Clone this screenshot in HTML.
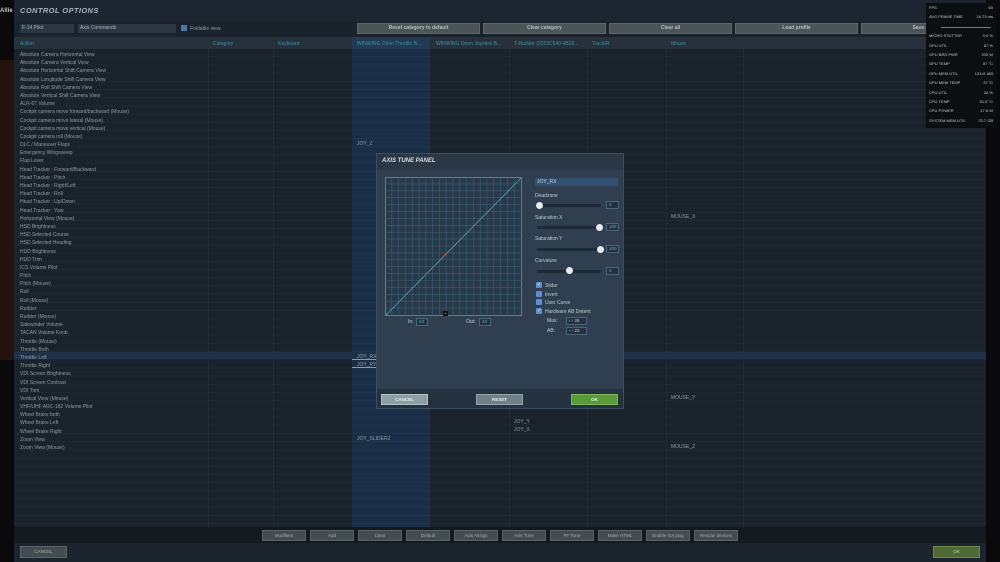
<!DOCTYPE html>
<html><head><meta charset="utf-8"><style>
*{margin:0;padding:0;box-sizing:border-box}
body{width:1000px;height:562px;overflow:hidden;background:#0a0a0c;font-family:"Liberation Sans",sans-serif;position:relative;color:#aab4bc}
.a{position:absolute}
.win{left:14px;top:0;width:972px;height:562px;background:#1a222b}
.t{font-size:5px;white-space:nowrap;color:#939da5}
.h{font-size:5px;color:#3d8fa8;white-space:nowrap}
.btn{background:#4b5557;border:1px solid #5d6769;color:#b8bec0;font-size:5px;font-weight:bold;text-align:center;line-height:9px}
.bb{background:#434c50;border:1px solid #5a6466;color:#a8b0b2;font-size:4.5px;text-align:center;line-height:9px;width:44px;height:11px;top:530px}
.ov div{display:flex;justify-content:space-between;font-size:4px;color:#c8cccf;height:9.4px;line-height:9.4px}
.cb{width:6px;height:6px;background:#5d8fd0;border-radius:1px;color:#fff;font-size:5px;line-height:6px;text-align:center}
.sl{height:3px;background:#1e2a36;border-radius:2px}
.kn{width:7px;height:7px;border-radius:50%;background:#e8ecef}
.nb{border:1px solid #4a6478;background:#24323f;color:#4fb0d0;font-size:4.5px;line-height:6px;padding-left:2px;height:8px}
.pt{font-size:5px;color:#c4ccd2}
.vl{position:absolute;top:49px;height:478px;width:1px;background:#222b35}
</style></head><body>
<div class="a t" style="left:0;top:8px;color:#c8c8c8;font-weight:bold;font-size:6px">Allie</div>
<div class="a" style="left:0;top:60px;width:14px;height:300px;background:#24120e"></div>
<div class="a win"></div>
<div class="a" style="left:14px;top:49px;width:972px;height:478px;background:repeating-linear-gradient(#1a222b 0,#1a222b 7.2px,#202933 7.2px,#202933 8.19px)"></div>
<div class="vl" style="left:208px"></div><div class="vl" style="left:273px"></div><div class="vl" style="left:509px"></div><div class="vl" style="left:587px"></div><div class="vl" style="left:666px"></div><div class="vl" style="left:743px"></div>
<div class="a" style="left:14px;top:0;width:972px;height:21px;background:#1d2630"></div>
<div class="a" style="left:20px;top:6px;font-size:7.5px;font-weight:bold;font-style:italic;color:#a8b2ba;letter-spacing:.4px">CONTROL OPTIONS</div>
<div class="a" style="left:20px;top:24px;width:54px;height:9px;background:#2b3744;font-size:5px;line-height:9px;padding-left:2px">F-14 Pilot</div>
<div class="a" style="left:78px;top:24px;width:98px;height:9px;background:#2b3744;font-size:5px;line-height:9px;padding-left:2px">Axis Commands</div>
<div class="a" style="left:181px;top:25px;width:6px;height:6px;background:#4f77a3"></div>
<div class="a t" style="left:190px;top:26px">Foldable view</div>
<div class="a btn" style="left:357px;top:23px;width:123px;height:11px">Reset category to default</div>
<div class="a btn" style="left:483px;top:23px;width:123px;height:11px">Clear category</div>
<div class="a btn" style="left:609px;top:23px;width:123px;height:11px">Clear all</div>
<div class="a btn" style="left:735px;top:23px;width:123px;height:11px">Load profile</div>
<div class="a btn" style="left:861px;top:23px;width:124px;height:11px">Save pro</div>
<div class="a" style="left:14px;top:37px;width:972px;height:12px;background:#27313c"></div>
<div class="a" style="left:352px;top:49px;width:78px;height:478px;background:repeating-linear-gradient(#1a2f47 0,#1a2f47 7.2px,#20364f 7.2px,#20364f 8.19px)"></div>
<div class="a" style="left:352px;top:37px;width:78px;height:12px;background:#223a54"></div>
<div class="a h" style="left:20px;top:41px">Action</div>
<div class="a h" style="left:213px;top:41px">Category</div>
<div class="a h" style="left:278px;top:41px">Keyboard</div>
<div class="a h" style="left:357px;top:41px">WINWING Orion Throttle B...</div>
<div class="a h" style="left:436px;top:41px">WINWING Orion Joystick B...</div>
<div class="a h" style="left:514px;top:41px">T-Rudder {2253C540-4B22...</div>
<div class="a h" style="left:592px;top:41px">TrackIR</div>
<div class="a h" style="left:671px;top:41px">Mouse</div>
<div class="a" style="left:14px;top:352px;width:972px;height:7px;background:#1f3248"></div>
<div class="a" style="left:20px;top:51px">
<div class="t" style="line-height:8.19px">Absolute Camera Horizontal View<br>Absolute Camera Vertical View<br>Absolute Horizontal Shift Camera View<br>Absolute Longitude Shift Camera View<br>Absolute Roll Shift Camera View<br>Absolute Vertical Shift Camera View<br>ALR-67 Volume<br>Cockpit camera move forward/backward (Mouse)<br>Cockpit camera move lateral (Mouse)<br>Cockpit camera move vertical (Mouse)<br>Cockpit camera roll (Mouse)<br>DLC / Maneuver Flaps<br>Emergency Wingsweep<br>Flap Lever<br>Head Tracker : Forward/Backward<br>Head Tracker : Pitch<br>Head Tracker : Right/Left<br>Head Tracker : Roll<br>Head Tracker : Up/Down<br>Head Tracker : Yaw<br>Horizontal View (Mouse)<br>HSD Brightness<br>HSD Selected Course<br>HSD Selected Heading<br>HUD Brightness<br>HUD Trim<br>ICS Volume Pilot<br>Pitch<br>Pitch (Mouse)<br>Roll<br>Roll (Mouse)<br>Rudder<br>Rudder (Mouse)<br>Sidewinder Volume<br>TACAN Volume Knob<br>Throttle (Mouse)<br>Throttle Both<br>Throttle Left<br>Throttle Right<br>VDI Screen Brightness<br>VDI Screen Contrast<br>VDI Trim<br>Vertical View (Mouse)<br>VHF/UHF ARC-182 Volume Pilot<br>Wheel Brake both<br>Wheel Brake Left<br>Wheel Brake Right<br>Zoom View<br>Zoom View (Mouse)</div></div>
<div class="a t" style="left:357px;top:141px">JOY_Z</div>
<div class="a t" style="left:357px;top:354px">JOY_RX</div>
<div class="a t" style="left:357px;top:362px">JOY_RY</div>
<div class="a" style="left:352px;top:359px;width:76px;height:1px;background:#8a9aa8"></div>
<div class="a" style="left:352px;top:367px;width:76px;height:1px;background:#8a9aa8"></div>
<div class="a t" style="left:357px;top:436px">JOY_SLIDER2</div>
<div class="a t" style="left:671px;top:214px">MOUSE_X</div>
<div class="a t" style="left:671px;top:395px">MOUSE_Y</div>
<div class="a t" style="left:671px;top:444px">MOUSE_Z</div>
<div class="a t" style="left:514px;top:419px">JOY_Y</div>
<div class="a t" style="left:514px;top:427px">JOY_X</div>
<div class="a" style="left:14px;top:527px;width:972px;height:16px;background:#141a20"></div>
<div class="a bb" style="left:262px">Modifiers</div>
<div class="a bb" style="left:310px">Add</div>
<div class="a bb" style="left:358px">Clear</div>
<div class="a bb" style="left:406px">Default</div>
<div class="a bb" style="left:454px">Axis Assign</div>
<div class="a bb" style="left:502px">Axis Tune</div>
<div class="a bb" style="left:550px">FF Tune</div>
<div class="a bb" style="left:598px">Make HTML</div>
<div class="a bb" style="left:646px">Enable hot plug</div>
<div class="a bb" style="left:694px">Rescan devices</div>
<div class="a" style="left:14px;top:543px;width:972px;height:19px;background:#1c252e"></div>
<div class="a bb" style="left:20px;top:546px;width:47px;height:12px;line-height:10px">CANCEL</div>
<div class="a bb" style="left:933px;top:546px;width:47px;height:12px;line-height:10px;background:#4f6a34;border-color:#6a8a48;color:#d0d8c8">OK</div>
<div class="a" style="left:376px;top:153px;width:248px;height:256px;background:#2f3f4f;border:1px solid #3d4e5e"></div>
<div class="a" style="left:377px;top:154px;width:246px;height:16px;background:#2a3846"></div>
<div class="a" style="left:382px;top:158px;font-size:6px;font-weight:bold;font-style:italic;color:#d8dee4">AXIS TUNE PANEL</div>
<svg class="a" style="left:385px;top:177px" width="137" height="139" viewBox="0 0 137 139">
<rect x="0.5" y="0.5" width="136" height="138" fill="#283a4a" stroke="#4a8aa0"/>
<g stroke="#3a5f72" stroke-width="0.6">
<path d="M6.8 0V139M13.6 0V139M20.4 0V139M27.2 0V139M34 0V139M40.8 0V139M47.6 0V139M54.4 0V139M61.2 0V139M68 0V139M74.8 0V139M81.6 0V139M88.4 0V139M95.2 0V139M102 0V139M108.8 0V139M115.6 0V139M122.4 0V139M129.2 0V139"/>
<path d="M0 6.9H137M0 13.8H137M0 20.7H137M0 27.6H137M0 34.5H137M0 41.4H137M0 48.3H137M0 55.2H137M0 62.1H137M0 69H137M0 75.9H137M0 82.8H137M0 89.7H137M0 96.6H137M0 103.5H137M0 110.4H137M0 117.3H137M0 124.2H137M0 131.1H137"/>
</g>
<line x1="1" y1="138" x2="136" y2="1" stroke="#5aa0b8" stroke-width="0.8"/>
<circle cx="60" cy="78" r="1.2" fill="#e03030"/>
<rect x="58" y="134" width="5" height="5" fill="#111"/>
<circle cx="60.5" cy="136.5" r="0.9" fill="#e03030"/>
</svg>
<div class="a pt" style="left:408px;top:319px">In:</div>
<div class="a nb" style="left:416px;top:318px;width:12px">43</div>
<div class="a pt" style="left:466px;top:319px">Out:</div>
<div class="a nb" style="left:479px;top:318px;width:12px">43</div>
<div class="a" style="left:535px;top:178px;width:83px;height:8px;background:#33516e;font-size:5px;color:#c8d8e4;line-height:8px;padding-left:2px">JOY_RX</div>
<div class="a pt" style="left:535px;top:193px">Deadzone</div>
<div class="a sl" style="left:537px;top:204px;width:64px"></div><div class="a kn" style="left:536px;top:202px"></div>
<div class="a nb" style="left:606px;top:201px;width:13px">0</div>
<div class="a pt" style="left:535px;top:215px">Saturation X</div>
<div class="a sl" style="left:537px;top:226px;width:64px"></div><div class="a kn" style="left:596px;top:224px"></div>
<div class="a nb" style="left:606px;top:223px;width:13px">100</div>
<div class="a pt" style="left:535px;top:236px">Saturation Y</div>
<div class="a sl" style="left:537px;top:248px;width:64px"></div><div class="a kn" style="left:597px;top:246px"></div>
<div class="a nb" style="left:606px;top:245px;width:13px">100</div>
<div class="a pt" style="left:535px;top:258px">Curvature</div>
<div class="a sl" style="left:537px;top:270px;width:64px"></div><div class="a kn" style="left:566px;top:267px"></div>
<div class="a nb" style="left:606px;top:267px;width:13px">0</div>
<div class="a cb" style="left:536px;top:282px">✓</div><div class="a pt" style="left:545px;top:283px">Slider</div>
<div class="a cb" style="left:536px;top:291px"></div><div class="a pt" style="left:545px;top:292px">Invert</div>
<div class="a cb" style="left:536px;top:299px"></div><div class="a pt" style="left:545px;top:300px">User Curve</div>
<div class="a cb" style="left:536px;top:308px">✓</div><div class="a pt" style="left:545px;top:309px">Hardware AB Detent</div>
<div class="a pt" style="left:547px;top:318px">Max:</div>
<div class="a nb" style="left:566px;top:317px;width:21px;color:#c4ccd2">‹ › 26</div>
<div class="a pt" style="left:547px;top:328px">AB:</div>
<div class="a nb" style="left:566px;top:327px;width:21px;color:#c4ccd2">‹ › 23</div>
<div class="a" style="left:377px;top:389px;width:246px;height:19px;background:#243240"></div>
<div class="a" style="left:381px;top:394px;width:47px;height:11px;background:#8a9ea4;border:1px solid #b0c0c4;color:#e8eef0;font-size:4.5px;font-weight:bold;text-align:center;line-height:9px">CANCEL</div>
<div class="a" style="left:476px;top:394px;width:47px;height:11px;background:#6f8088;border:1px solid #94a4aa;color:#e8eef0;font-size:4.5px;font-weight:bold;text-align:center;line-height:9px">RESET</div>
<div class="a" style="left:571px;top:394px;width:47px;height:11px;background:#5a9a3a;border:1px solid #7ab858;color:#eef4e8;font-size:4.5px;font-weight:bold;text-align:center;line-height:9px">OK</div>
<div class="a ov" style="left:926px;top:3px;width:70px;height:125px;background:#0c0f12;padding:0 3px">
<div><span>FPS</span><span>60</span></div>
<div><span>AVG FRAME TIME</span><span>16.73 ms</span></div>
<div style="position:relative"><span style="position:absolute;left:12px;right:2px;top:5px;height:1px;background:#3a8ac0"></span></div>
<div><span>MICRO STUTTER</span><span>0.0 %</span></div>
<div><span>GPU UTIL</span><span>87 %</span></div>
<div><span>GPU BRD PWR</span><span>203 W</span></div>
<div><span>GPU TEMP</span><span>57 °C</span></div>
<div><span>GPU MEM UTIL</span><span>13141 MB</span></div>
<div><span>GPU MEM TEMP</span><span>72 °C</span></div>
<div><span>CPU UTIL</span><span>34 %</span></div>
<div><span>CPU TEMP</span><span>51.5 °C</span></div>
<div><span>CPU POWER</span><span>17.6 W</span></div>
<div><span>SYSTEM MEM UTIL</span><span>23.7 GB</span></div>
</div>
</body></html>
